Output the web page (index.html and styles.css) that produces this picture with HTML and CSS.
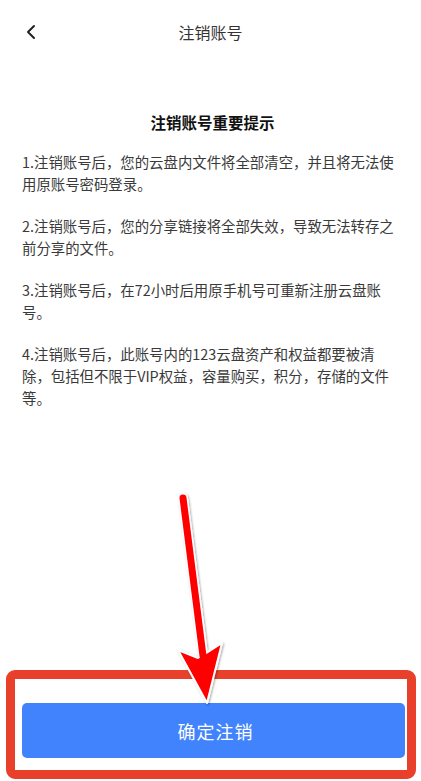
FILE: index.html
```html
<!DOCTYPE html>
<html lang="zh-CN">
<head>
<meta charset="UTF-8">
<meta name="viewport" content="width=device-width, initial-scale=1.0">
<title>注销账号</title>
<link rel="stylesheet" href="styles.css">
</head>
<body>

<div class="page">
  <div class="header">
    <span class="back">
      <svg width="12" height="16" viewBox="0 0 12 16"><path d="M9 2 L3 8 L9 14" fill="none" stroke="#222" stroke-width="2" stroke-linecap="round" stroke-linejoin="round"/></svg>
    </span>
    <div class="title">注销账号</div>
  </div>

  <div class="content">
    <h2 class="notice-title">注销账号重要提示</h2>
    <p class="notice">1.注销账号后，您的云盘内文件将全部清空，并且将无法使用原账号密码登录。</p>
    <p class="notice">2.注销账号后，您的分享链接将全部失效，导致无法转存之前分享的文件。</p>
    <p class="notice">3.注销账号后，在72小时后用原手机号可重新注册云盘账号。</p>
    <p class="notice">4.注销账号后，此账号内的123云盘资产和权益都要被清除，包括但不限于VIP权益，容量购买，积分，存储的文件等。</p>
  </div>

  <div class="footer">
    <button class="btn-confirm">确定注销</button>
  </div>

  <!-- annotation: frame round the button and arrow pointing at it -->
  <div class="mark-frame"></div>
  <svg class="mark-arrow" width="421" height="781" viewBox="0 0 421 781">
    <defs>
      <filter id="shade" x="-20%" y="-5%" width="140%" height="110%">
        <feDropShadow dx="1" dy="1" stdDeviation="1" flood-color="#000" flood-opacity="0.35"/>
      </filter>
    </defs>
    <g filter="url(#shade)">
      <path d="M183 498 L203 655" stroke="#fff" stroke-width="10" stroke-linecap="round"/>
      <path d="M178 650 L198 658 L208 652 L222 643 L207 703 Z" fill="#ff0000" stroke="#fff" stroke-width="2" stroke-linejoin="round"/>
      <path d="M183 498 L203 656" stroke="#ff0000" stroke-width="7" stroke-linecap="round"/>
    </g>
  </svg>
</div>

</body>
</html>
```

FILE: styles.css
```css
/* page layout for the account cancel screen */
body {
  margin: 0;
  padding: 0;
  background-color: #fff;
  font-family: "Noto Sans CJK SC", "Noto Sans", sans-serif;
  color: #333;
}
.page {
  position: relative;
  width: 421px;
  height: 781px;
  display: flex;
  flex-direction: column;
  overflow: hidden;
}
.header {
  height: 64px;
  display: flex;
  align-items: center;
  justify-content: center;
  position: relative;
}
.back {
  position: absolute;
  left: 25px;
  top: 24px;
  display: flex;
}
.title {
  font-size: 16px;
  color: #333;
}
.content {
  padding: 46px 18px 0 22px;
}
.notice-title {
  margin: 0 0 17px 0;
  font-size: 15.5px;
  line-height: 24px;
  font-weight: bold;
  text-align: center;
  color: #111;
}
.notice {
  margin: 0 0 20px 0;
  font-size: 14.4px;
  line-height: 22px;
  color: #3a3a3a;
}
.footer {
  margin-top: auto;
  padding: 0 16px 23px 22px;
}
.btn-confirm {
  width: 100%;
  height: 55px;
  border: none;
  border-radius: 5px;
  padding-left: 10px;
  background-color: #4083fc;
  color: #fff;
  font-family: "Noto Sans CJK SC", sans-serif;
  font-size: 18px;
  letter-spacing: 1px;
}
.mark-frame {
  position: absolute;
  left: 6px;
  top: 670px;
  width: 392px;
  height: 91px;
  border: 9px solid #e8402a;
  border-radius: 9px;
}
.mark-arrow {
  position: absolute;
  left: 0;
  top: 0;
}
```
